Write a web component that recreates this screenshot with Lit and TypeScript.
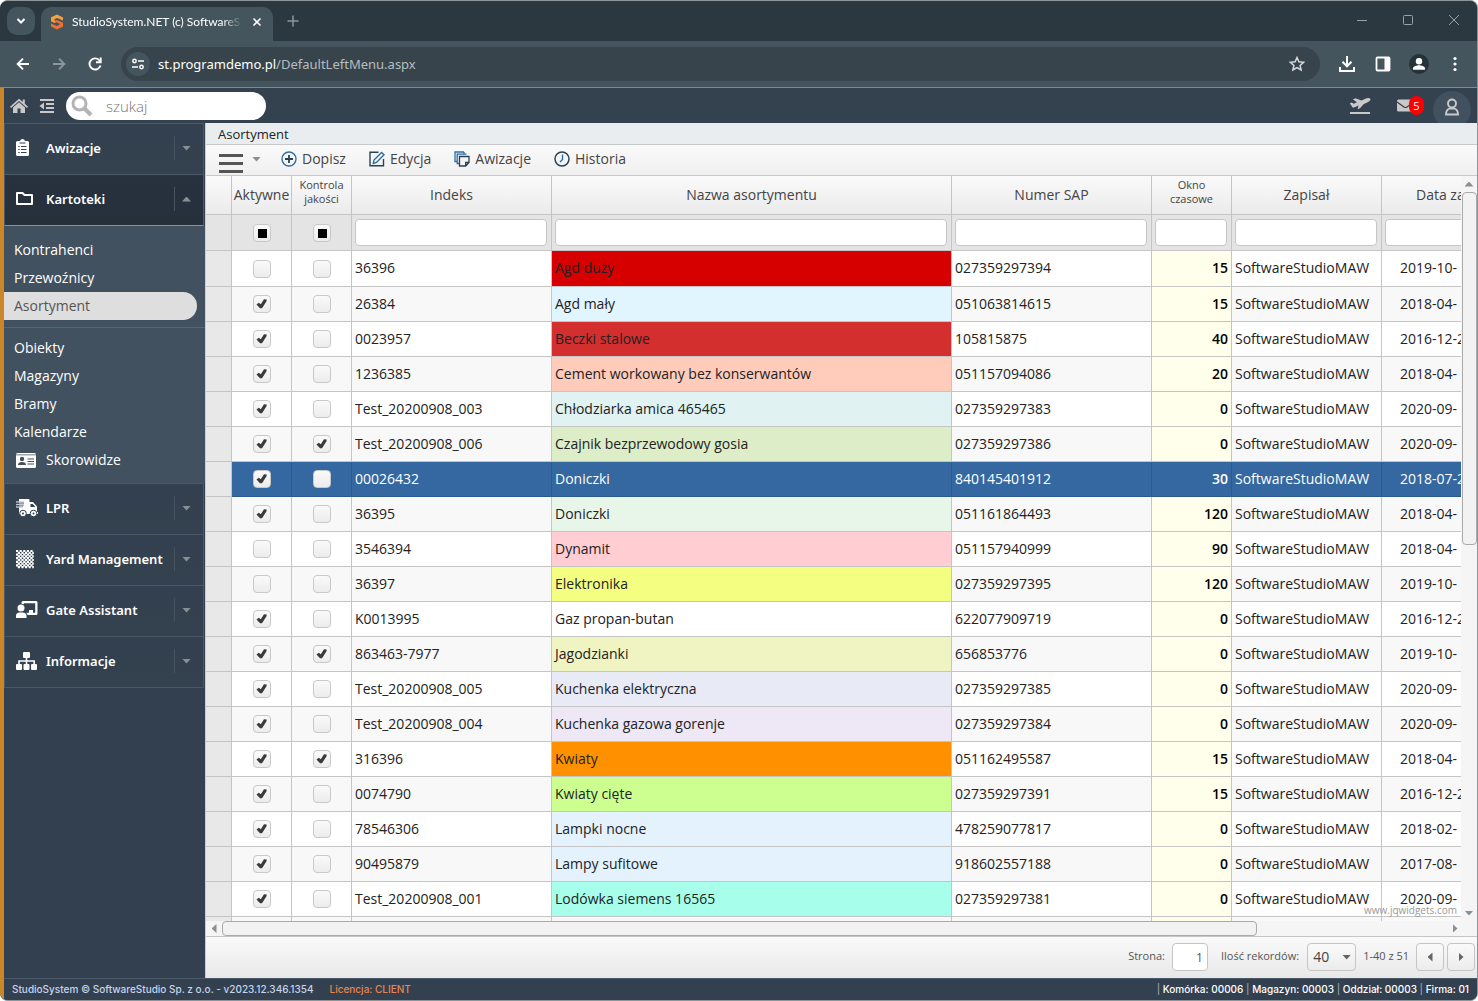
import { LitElement, html, css, TemplateResult } from 'lit';
import { customElement } from 'lit/decorators.js';
import { styleMap } from 'lit/directives/style-map.js';
import { classMap } from 'lit/directives/class-map.js';

interface Row {
  active: boolean;
  quality: boolean;
  index: string;
  name: string;
  color: string;
  sap: string;
  slot: string;
  date: string;
  selected?: boolean;
}

const row = (a: number, q: number, index: string, name: string, color: string, sap: string, slot: number, date: string, selected = false): Row => ({
  active: !!a, quality: !!q, index, name, color, sap, slot: String(slot), date, selected,
});

const ROWS: Row[] = [
  row(0, 0, '36396', 'Agd duży', '#d60000', '027359297394', 15, '2019-10-'),
  row(1, 0, '26384', 'Agd mały', '#e1f5fe', '051063814615', 15, '2018-04-'),
  row(1, 0, '0023957', 'Beczki stalowe', '#d32f2f', '105815875', 40, '2016-12-2'),
  row(1, 0, '1236385', 'Cement workowany bez konserwantów', '#ffccbc', '051157094086', 20, '2018-04-'),
  row(1, 0, 'Test_20200908_003', 'Chłodziarka amica 465465', '#e0f2f1', '027359297383', 0, '2020-09-'),
  row(1, 1, 'Test_20200908_006', 'Czajnik bezprzewodowy gosia', '#dcedc8', '027359297386', 0, '2020-09-'),
  row(1, 0, '00026432', 'Doniczki', '#3568a0', '840145401912', 30, '2018-07-2', true),
  row(1, 0, '36395', 'Doniczki', '#e8f5e9', '051161864493', 120, '2018-04-'),
  row(0, 0, '3546394', 'Dynamit', '#ffcdd2', '051157940999', 90, '2018-04-'),
  row(0, 0, '36397', 'Elektronika', '#f4ff81', '027359297395', 120, '2019-10-'),
  row(1, 0, 'K0013995', 'Gaz propan-butan', '#ffffff', '622077909719', 0, '2016-12-2'),
  row(1, 1, '863463-7977', 'Jagodzianki', '#f0f4c3', '656853776', 0, '2019-10-'),
  row(1, 0, 'Test_20200908_005', 'Kuchenka elektryczna', '#e8eaf6', '027359297385', 0, '2020-09-'),
  row(1, 0, 'Test_20200908_004', 'Kuchenka gazowa gorenje', '#ede7f6', '027359297384', 0, '2020-09-'),
  row(1, 1, '316396', 'Kwiaty', '#ff9100', '051162495587', 15, '2018-04-'),
  row(1, 0, '0074790', 'Kwiaty cięte', '#ccff90', '027359297391', 15, '2016-12-2'),
  row(1, 0, '78546306', 'Lampki nocne', '#e3f2fd', '478259077817', 0, '2018-02-'),
  row(1, 0, '90495879', 'Lampy sufitowe', '#e3f2fd', '918602557188', 0, '2017-08-'),
  row(1, 0, 'Test_20200908_001', 'Lodówka siemens 16565', '#a7ffeb', '027359297381', 0, '2020-09-'),
];

const icon = {
  chevron: html`<svg width="12" height="12" viewBox="0 0 12 12" fill="none" stroke="#fff" stroke-width="2"><path d="M2.500 4l3.500 3.500L9.500 4"/></svg>`,
  logo: html`<svg width="14" height="16" viewBox="0 0 14 16"><path d="M7 0.500 13 3.500v3L10 5.300 7 4 4.500 5.200v1.300L7 7.600 4.500 9 1 7.300v-4z" fill="#f6a23c"/><path d="M7 15.500 1 12.500v-3l3 1.300 3 1.200 2.500-1.200V9.500L7 8.400l-3-1.500L7 6l6 2.700v3.800z" fill="#f0702e"/></svg>`,
  close: html`<svg width="10" height="10" viewBox="0 0 10 10" stroke="#fff" stroke-width="1.600"><path d="M1.500 1.500l7 7M8.500 1.500l-7 7"/></svg>`,
  plus: html`<svg width="12" height="12" viewBox="0 0 12 12" stroke="#8b979c" stroke-width="1.500"><path d="M6 .5v11M.5 6h11"/></svg>`,
  min: html`<svg width="12" height="12" viewBox="0 0 12 12" stroke="#98a1a5"><path d="M1 5.500h10"/></svg>`,
  max: html`<svg width="12" height="12" viewBox="0 0 12 12" stroke="#98a1a5" fill="none"><rect x="1.500" y="0.500" width="9" height="9" rx="1"/></svg>`,
  winClose: html`<svg width="12" height="12" viewBox="0 0 12 12" stroke="#98a1a5"><path d="M1 0l10 10M11 0L1 10"/></svg>`,
  back: html`<svg width="16" height="16" viewBox="0 0 16 16" stroke="#fff" stroke-width="1.900" fill="none"><path d="M14 8H3M8 2.700 2.700 8 8 13.300"/></svg>`,
  forward: html`<svg width="16" height="16" viewBox="0 0 16 16" stroke="#8b979c" stroke-width="1.900" fill="none"><path d="M2 8h11M8 2.700 13.300 8 8 13.300"/></svg>`,
  reload: html`<svg width="16" height="16" viewBox="0 0 16 16" fill="none" stroke="#fff" stroke-width="1.900"><path d="M13.500 9.500a5.600 5.600 0 1 1-1.300-5.400L13.500 5.500"/><path d="M13.700 1.500v4.700H9" /></svg>`,
  tune: html`<svg width="14" height="14" viewBox="0 0 14 14" fill="none" stroke="#fff" stroke-width="1.500"><circle cx="3.500" cy="4" r="1.700"/><path d="M7 4h6M1 10h6"/><circle cx="10.500" cy="10" r="1.700"/></svg>`,
  star: html`<svg width="18" height="18" viewBox="0 0 18 18" fill="none" stroke="#d5dadc" stroke-width="1.500"><path d="M9 2.500l1.900 4.300 4.700.5-3.500 3.100 1 4.600L9 12.600 4.900 15l1-4.600L2.400 7.300l4.700-.5z"/></svg>`,
  download: html`<svg width="18" height="18" viewBox="0 0 18 18" fill="none" stroke="#fff" stroke-width="2"><path d="M9 1v10M4.500 6.800 9 11.300l4.500-4.500M2 12v4h14v-4"/></svg>`,
  panel: html`<svg width="16" height="16" viewBox="0 0 16 16"><rect x="1.500" y="1.500" width="13" height="13" rx="1" fill="none" stroke="#fff" stroke-width="1.800"/><path d="M9.500 1.500h5v13h-5z" fill="#fff"/></svg>`,
  profile: html`<svg width="20" height="20" viewBox="0 0 20 20"><circle cx="10" cy="10" r="10" fill="#26323a"/><circle cx="10" cy="7.300" r="3.200" fill="#fff"/><path d="M4 15.700v-1.400c0-2 4-3 6-3s6 1 6 3v1.400z" fill="#fff"/></svg>`,
  dots: html`<svg width="4" height="16" viewBox="0 0 4 16" fill="#fff"><circle cx="2" cy="2.500" r="1.600"/><circle cx="2" cy="8" r="1.600"/><circle cx="2" cy="13.500" r="1.600"/></svg>`,
  home: html`<svg width="18" height="16" viewBox="0 0 18 16" fill="#c9c9c9"><path d="M9 .8 0 8.700l1.100 1.200L9 3l7.900 6.900L18 8.700l-3.200-2.900V1.500h-2v2.600z"/><path d="M9 4.300 3 9.500V15h4.500v-4.500h3V15H15V9.500z"/></svg>`,
  outdent: html`<svg width="16" height="16" viewBox="0 0 16 16" fill="#c9c9c9"><path d="M1 1h14v2H1zM7 5h8v2H7zM7 9h8v2H7zM1 13h14v2H1zM5 4.500v7L.5 8z"/></svg>`,
  search: html`<svg width="22" height="22" viewBox="0 0 22 22" fill="none" stroke="#b4b4b4"><circle cx="8.500" cy="8.500" r="6.500" stroke-width="3"/><path d="M13.500 13.500 20 20" stroke-width="4"/></svg>`,
  plane: html`<svg width="22" height="18" viewBox="0 0 22 18" fill="#c9c9c9"><path d="M1 15h20v2H1zM3.800 10.700.8 6.200l2-.8 2 1.300 3.200-1.500L3.900 2.400l2.500-1.100 6.100 2.300 3.800-1.800c1.800-.9 4.300-1 5 0 .6 1.200-.6 2.400-2.200 3.200l-4.600 2.200-3.500 4-2.400 1 .9-3.700-3.200 1.600z"/></svg>`,
  mail: html`<svg width="17" height="13" viewBox="0 0 17 13"><rect width="17" height="12" y=".5" rx="1.500" fill="#c9c9c9"/><path d="M0 3l7 5q1.500 1 3 0l7-5" fill="none" stroke="#34414f" stroke-width="1.200"/></svg>`,
  user: html`<svg width="16" height="18" viewBox="0 0 16 18" fill="none" stroke="#c9c9c9" stroke-width="1.900"><circle cx="8" cy="5.500" r="4"/><path d="M5.500 10.500h5q3.500 1.500 3.500 6H2q0-4.500 3.500-6z"/></svg>`,
  clipboard: html`<svg width="24" height="20" viewBox="0 0 24 20"><path d="M2.500 3H5a2.600 2.600 0 0 1 5 0h2.500q1.500 0 1.500 1.500v12q0 1.500-1.500 1.500h-10Q1 18 1 16.500v-12Q1 3 2.500 3z" fill="#fff"/><path d="M6 8.500h5.500M6 11.500h5.500M6 14.500h5.500M3.300 8.500h1.400M3.300 11.500h1.400M3.300 14.500h1.400M4.500 5h6" stroke="#334050" fill="none"/></svg>`,
  folder: html`<svg width="24" height="20" viewBox="0 0 24 20" fill="none" stroke="#fff" stroke-width="2"><path d="M2 4h5.500l2 2H17v9H2z" stroke-linejoin="round"/></svg>`,
  card: html`<svg width="24" height="20" viewBox="0 0 24 20"><rect x="2" y="3" width="20" height="15" rx="1.500" fill="#fff"/><circle cx="8" cy="9" r="2.200" fill="#425160"/><path d="M4 15q0-3 4-3t4 3zM13.500 8.500H20v1h-6.500zM13.500 11H20v1h-6.500zM13.500 13.500H20v1h-6.500zM2 4.500h20v.8H2z" fill="#425160"/></svg>`,
  truck: html`<svg width="24" height="20" viewBox="0 0 24 20"><path d="M4 1h9.500q1 0 1 1v2H18l4 4.500V14h1v2H4V1z" fill="#fff"/><path d="M1 4h8M1 6.500h8M1 9h7" stroke="#c3cad6" stroke-width="1.300"/><path d="M1 5.200h8M2 7.800h6.500" stroke="#334050" stroke-width=".7"/><path d="M15.500 6v3h5l-2.800-3z" fill="#334050"/><g fill="#fff" stroke="#334050"><circle cx="8" cy="15.500" r="3.300"/><circle cx="18.500" cy="15.500" r="3.300"/></g><circle cx="8" cy="15.500" r="1" fill="#334050"/><circle cx="18.500" cy="15.500" r="1" fill="#334050"/></svg>`,
  yard: html`<svg width="24" height="20" viewBox="0 0 24 20"><g fill="none" stroke="#fff" stroke-width="2.200" stroke-dasharray="2.200 1.400"><path d="M1 2h18M1 5.600h18M1 9.200h18M1 12.800h18M1 16.400h18"/><path d="M2.800 3.800h16M2.800 7.400h16M2.800 11h16M2.800 14.600h16M2.800 18.200h16"/></g></svg>`,
  gate: html`<svg width="24" height="20" viewBox="0 0 24 20" fill="#fff"><path d="M6.500 2.500Q6.500 1 8 1h13q1.500 0 1.500 1.500v11Q22.500 15 21 15h-8.500q-.4-1.500-1.300-2.300H14V10h4v2.700h2.200V3.300H8.900v1Q8 3.700 6.500 3.700z"/><circle cx="6" cy="8" r="3.500"/><path d="M1 18v-2q0-3.500 3.500-3.500h3Q11.500 12.500 11.500 16v2z"/></svg>`,
  sitemap: html`<svg width="24" height="20" viewBox="0 0 24 20" fill="#fff"><rect x="8" y="1" width="7" height="6" rx="1"/><rect x="1" y="13" width="6" height="6" rx="1"/><rect x="8.500" y="13" width="6" height="6" rx="1"/><rect x="16" y="13" width="6" height="6" rx="1"/><path d="M10.700 7h1.600v2.200H20V13h-1.600v-2.200h-6.100V13h-1.600v-2.200H4.800V13H3.200V9.200h7.500z"/></svg>`,
  add: html`<svg width="16" height="16" viewBox="0 0 16 16" fill="none"><circle cx="8" cy="8" r="7" stroke="#2f6da5" stroke-width="1.400"/><path d="M8 4v8M4 8h8" stroke="#2a4152" stroke-width="1.800"/></svg>`,
  edit: html`<svg width="16" height="16" viewBox="0 0 16 16" fill="none" stroke-width="1.400"><path d="M9.500 1.200H1v13.500h13.500V8" stroke="#2a4152"/><path d="M12.600 1.500 15 3.700 7.500 11.500l-3.200.9.700-3.300z" stroke="#2f6da5"/></svg>`,
  copy: html`<svg width="16" height="16" viewBox="0 0 16 16" fill="none" stroke-width="1.300"><path d="M10 1H1v9.500h2M12.500 3.200H3.200v9.300h2.300M10 1v2" stroke="#2f6da5"/><path d="M5.500 5.500H15v6L11.700 15H5.500zM15 11.500h-3.300V15" stroke="#2a4152"/></svg>`,
  clock: html`<svg width="16" height="16" viewBox="0 0 16 16" fill="none"><circle cx="8" cy="8" r="7" stroke="#2a4152" stroke-width="1.500"/><path d="M8.500 3.500v5L6 11" stroke="#2f6da5" stroke-width="1.400"/></svg>`,
};

@customElement('app-root')
export class AppRoot extends LitElement {
  static styles = css`
    :host {
      display: flex;
      flex-direction: column;
      height: 100vh;
      box-sizing: border-box;
      overflow: hidden;
      border: 1px solid #8d9598;
      border-left: 0;
      border-radius: 8px;
      background: #334050;
      font: 14px/20px 'Open Sans', 'Noto Sans', sans-serif;
      color: #222;
    }
    * { box-sizing: border-box; }
    svg { display: block; flex: none; }
    button {
      display: inline-flex;
      align-items: center;
      justify-content: center;
      padding: 0;
      border: 0;
      background: none;
      color: inherit;
      font: inherit;
    }
    a { color: inherit; text-decoration: none; }
    ul { margin: 0; padding: 0; list-style: none; }

    /* browser frame */
    .tabs { display: flex; height: 40px; padding: 6px 9px 0 7px; background: #2c383f; flex: none; }
    .tablist { width: 28px; height: 28px; border-radius: 10px; background: #45555e; }
    .tab {
      display: flex;
      align-items: center;
      width: 232px;
      margin-left: 6px;
      padding: 0 11px 5px 9px;
      border-radius: 10px 10px 0 0;
      background: #45555e;
      color: #fff;
      font: 12px/20px 'Lato', sans-serif;
    }
    .title {
      flex: 1;
      min-width: 0;
      margin: 0 10px 0 8px;
      overflow: hidden;
      white-space: nowrap;
      mask-image: linear-gradient(90deg, #000 88%, transparent);
    }
    .new { width: 28px; height: 28px; margin-left: 6px; }
    .win { display: flex; gap: 18px; margin-left: auto; }
    .win button { width: 28px; height: 28px; }
    .bar {
      display: flex;
      align-items: center;
      flex: none;
      height: 47px;
      padding: 0 8px 0 9px;
      gap: 8px;
      background: #45555e;
      border-bottom: 1px solid #7d8a90;
    }
    .bar button { width: 28px; height: 28px; }
    .omni {
      display: flex;
      align-items: center;
      flex: 1;
      height: 34px;
      margin: 0 5px 0 4px;
      padding: 0 9px 0 5px;
      border-radius: 17px;
      background: #38444b;
      color: #fff;
      font: 13px/20px 'Noto Sans', sans-serif;
    }
    .omni .tune { width: 24px; height: 24px; margin-right: 8px; border-radius: 12px; background: #45555e; }
    .url { flex: 1; color: #b6bdc0; }
    .url b { font-weight: 400; color: #fff; }

    /* application */
    .app { display: flex; flex-direction: column; flex: 1; min-height: 0; border-left: 4px solid #cb862a; }
    .top { display: flex; align-items: center; flex: none; height: 35px; padding: 0 6px; background: #34414f; overflow: hidden; }
    .top .out { margin: 0 11px 0 11px; }
    .search { display: flex; align-items: center; width: 200px; height: 28px; padding-left: 5px; border-radius: 14px; background: #fff; }
    .search input { flex: 1; min-width: 0; margin-left: 13px; padding: 0; border: 0; outline: 0; background: none; font: 300 15px/20px 'Open Sans', sans-serif; }
    .search input::placeholder { color: #777; }
    .right { display: flex; align-items: center; margin-left: auto; }
    .mail { margin-left: 26px; }
    .badge { margin-left: -5px; width: 15px; height: 19px; border-radius: 8px; background: #f00; color: #fff; font-size: 11px; line-height: 19px; text-align: center; }
    .avatar { align-self: flex-start; width: 38px; height: 38px; margin: 8px 0 0 9px; padding-bottom: 6px; border-radius: 19px; background: #425160; }
    .body { display: flex; flex: 1; min-height: 0; }

    /* side menu */
    nav { width: 202px; flex: none; padding-right: 1px; color: #fff; background: #334050; border-right: 1px solid #c3d2da; }
    .item { display: flex; align-items: center; width: 100%; height: 51px; padding: 0 0 2px 10px; border: 1px solid #4a5967; border-bottom: 0; background: linear-gradient(#33404f, #34424f); text-align: left; font: 600 13px/20px 'Noto Sans', sans-serif; }
    .item span { flex: 1; padding: 0 0 1px 7px; }
    .item.open { background: linear-gradient(#28323f, #26303b); border-bottom: 1px solid #cb862a; height: 52px; }
    .item.last { border-bottom: 1px solid #4a5967; height: 52px; }
    .item i { width: 29px; height: 24px; display: flex; align-items: center; padding-left: 7px; border-left: 1px solid #46535f; }
    .arrow { width: 9px; height: 5px; background: #8a8f94; clip-path: polygon(0 0, 100% 0, 50% 100%); }
    .arrow.up { clip-path: polygon(50% 0, 100% 100%, 0 100%); }
    .arrow.left { width: 5px; height: 9px; clip-path: polygon(100% 0, 100% 100%, 0 50%); }
    .arrow.rightward { width: 5px; height: 9px; clip-path: polygon(0 0, 100% 50%, 0 100%); }
    .sub { padding: 10px 0 9px; margin-right: -1px; background: #425160; font-weight: 500; }
    .sub a { display: flex; align-items: center; gap: 8px; height: 28px; padding: 0 10px; }
    .sub .current { margin-right: 8px; border-radius: 0 14px 14px 0; background: #dedede; color: #555; font-weight: 400; }
    .sub .sep { margin-top: 7px; padding-top: 6px; border-top: 1px solid #566573; }

    /* content */
    main { display: flex; flex-direction: column; flex: 1; min-width: 0; background: #fff; }
    h1 { margin: 0; padding: 1px 12px 0; height: 22px; flex: none; background: #e9edf0; border-bottom: 1px solid #c5c9cc; font-size: 13px; line-height: 20px; font-weight: 400; }
    .tools { display: flex; align-items: center; flex: none; height: 30px; padding: 0 13px 2px; background: linear-gradient(#fafafa, #f0f0f0); color: #444; }
    .tools > button { gap: 5px; height: 28px; margin-right: 23px; }
    .tools .menu { gap: 9px; margin-right: 20px; }
    .burger { display: flex; flex-direction: column; gap: 5px; width: 24px; padding-top: 8px; }
    .burger u { height: 3px; background: #555; }
    .grid { display: flex; flex: 1; min-height: 0; position: relative; border-top: 1px solid #c8c8c8; overflow: hidden; }
    .view { flex: 1; min-width: 0; overflow: hidden; }
    table { width: 100%; table-layout: fixed; border-collapse: separate; border-spacing: 0; }
    th, td { height: 35px; padding: 0 3px 1px; border: 0 solid #c5c5c5; border-width: 0 1px 1px 0; overflow: hidden; white-space: nowrap; font-weight: 400; text-align: left; }
    th:last-child, td:last-child { border-right: 0; }
    thead th { height: 39px; padding: 0; background: linear-gradient(#fafafa, #ebebeb); color: #444; text-align: center; }
    thead .two { padding-bottom: 6px; font-size: 11px; line-height: 14px; }
    thead .clip { padding-left: 34px; text-align: left; }
    .filter td { height: 36px; background: #e4e4e4; }
    .filter input[type='text'] { display: block; width: calc(100% - 1px); height: 27px; border: 1px solid #c5c5c5; border-radius: 4px; background: #fff; }
    .filter td:last-child { padding-right: 0; }
    .filter td:last-child input { width: 120px; }
    tr.first td { height: 36px; }
    tbody tr:nth-child(odd) td { background: #f8f8f8; }
    tbody tr:nth-child(even) td { background: #fff; }
    tbody tr.filter td { background: #e4e4e4; }
    tbody tr td.head { background: #e8e8e8; }
    tbody tr td.slot { background: #ffffeb; text-align: right; font-weight: 600; color: #000; }
    tbody tr td.name { background: var(--tone); }
    td.date { padding: 0 0 1px 18px; text-overflow: clip; }
    td.box { text-align: center; padding: 0; }
    tbody tr.sel td:not(.head) { background: #3568a0; border-color: #2c5a8e; color: #fff; font-weight: 500; }
    tbody tr.sel td.slot { font-weight: 600; }
    input[type='checkbox'] { appearance: none; display: block; width: 18px; height: 18px; margin: 0 auto; border: 1px solid #c8c8c8; border-radius: 4px; background: linear-gradient(#fafafa, #ececec); }
    input[type='checkbox']:checked::before { content: ''; display: block; width: 16px; height: 16px; background: #3a3a3a; clip-path: path('M3 8.500 5.300 6.800 7.300 8.300 10.500 3.300 13.200 3.600 13 5.200 8.500 12.300 6.500 12.300z'); }
    input[type='checkbox']:indeterminate::before { content: ''; display: block; width: 9px; height: 9px; margin: 4px; background: #000; }
    .brand { position: absolute; right: 20px; bottom: 3px; color: #999; font-size: 10px; line-height: 16px; }
    .vbar { display: flex; flex-direction: column; align-items: center; width: 16px; flex: none; background: #f5f5f5; }
    .vbar button, .hbar button { flex: none; width: 16px; height: 16px; }
    .track { flex: 1; align-self: stretch; min-height: 0; }
    .thumb { border: 1px solid #aaa; border-radius: 4px; background: #f2f2f2; }
    .vbar .thumb { width: 15px; height: 49.500%; margin-left: 1px; }
    .hbar { display: flex; flex: none; align-items: center; height: 16px; padding-right: 14px; background: #f5f5f5; border-bottom: 1px solid #c5c5c5; }
    .hbar .thumb { width: 84.500%; height: 15px; }
    .pager { display: flex; align-items: center; justify-content: flex-end; flex: none; height: 41px; padding: 0 2px 1px; background: linear-gradient(#fafafa, #e8e8e8); color: #555; font-size: 11px; }
    .pager label, .pager > span { padding-bottom: 2px; }
    .pager input { width: 36px; height: 28px; margin: 0 13px 0 7px; padding: 0 4px; border: 1px solid #c5c5c5; border-radius: 4px; background: #fff; color: #555; font: 12px/20px 'Open Sans', sans-serif; text-align: right; }
    .pick { display: flex; align-items: center; width: 49px; height: 28px; margin: 0 7px 0 8px; padding-right: 4px; border: 1px solid #c5c5c5; border-radius: 4px; background: linear-gradient(#fafafa, #ececec); }
    .pick select { appearance: none; flex: 1; min-width: 0; padding: 0 0 0 5px; border: 0; background: none; color: #444; font: 14px/20px 'Open Sans', sans-serif; }
    .pager button { width: 28px; height: 28px; border: 1px solid #c5c5c5; border-radius: 4px; background: linear-gradient(#fafafa, #ececec); }
    .pager .prev { margin: 0 3px 0 7px; }
    .pager .arrow { background: #666; }
    footer { display: flex; align-items: center; gap: 16px; flex: none; height: 22px; padding: 0 8px 2px; border-top: 1px solid #4a5967; background: #334050; color: #c8d4ea; font: 500 10px/18px 'Inter', 'Open Sans', sans-serif; }
    footer .lic { color: #e8854a; }
    footer .info { margin-left: auto; color: #fff; }
    footer .info span { color: #98a2ac; }
  `;

  private item(label: string, glyph: TemplateResult, extra = '') {
    const open = extra === 'open';
    return html`<button class="item ${extra}" aria-expanded=${open}>${glyph}<span>${label}</span><i><b class="arrow ${open ? 'up' : ''}"></b></i></button>`;
  }

  private check(label: string, checked: boolean, mixed = false) {
    return html`<input type="checkbox" aria-label=${label} .checked=${checked} .indeterminate=${mixed}>`;
  }

  private row(r: Row, i: number) {
    return html`<tr class=${classMap({ sel: !!r.selected, first: i === 0 })}>
      <td class="head"></td>
      <td class="box">${this.check('Aktywne', r.active)}</td>
      <td class="box">${this.check('Kontrola jakości', r.quality)}</td>
      <td>${r.index}</td>
      <td class="name" style=${styleMap({ '--tone': r.color })}>${r.name}</td>
      <td>${r.sap}</td>
      <td class="slot">${r.slot}</td>
      <td>SoftwareStudioMAW</td>
      <td class="date">${r.date}</td>
    </tr>`;
  }

  render() {
    const text = (label: string) => html`<td><input type="text" aria-label=${label}></td>`;
    return html`
      <div class="tabs">
        <button class="tablist" aria-label="Karty">${icon.chevron}</button>
        <div class="tab">${icon.logo}<span class="title">StudioSystem.NET (c) SoftwareS</span><button aria-label="Zamknij kartę">${icon.close}</button></div>
        <button class="new" aria-label="Nowa karta">${icon.plus}</button>
        <div class="win">
          <button aria-label="Minimalizuj">${icon.min}</button>
          <button aria-label="Maksymalizuj">${icon.max}</button>
          <button aria-label="Zamknij">${icon.winClose}</button>
        </div>
      </div>
      <div class="bar">
        <button aria-label="Wstecz">${icon.back}</button>
        <button aria-label="Dalej">${icon.forward}</button>
        <button aria-label="Odśwież">${icon.reload}</button>
        <div class="omni">
          <button class="tune" aria-label="Informacje o witrynie">${icon.tune}</button>
          <span class="url"><b>st.programdemo.pl</b>/DefaultLeftMenu.aspx</span>
          <button aria-label="Zakładka">${icon.star}</button>
        </div>
        <button aria-label="Pobrane">${icon.download}</button>
        <button aria-label="Panel boczny">${icon.panel}</button>
        <button aria-label="Profil">${icon.profile}</button>
        <button aria-label="Menu">${icon.dots}</button>
      </div>
      <div class="app">
        <header class="top">
          <button aria-label="Start">${icon.home}</button>
          <button class="out" aria-label="Zwiń menu">${icon.outdent}</button>
          <label class="search">${icon.search}<input type="text" placeholder="szukaj" aria-label="szukaj"></label>
          <div class="right">
            <button aria-label="Odloty">${icon.plane}</button>
            <button class="mail" aria-label="Wiadomości">${icon.mail}<span class="badge">5</span></button>
            <button class="avatar" aria-label="Konto">${icon.user}</button>
          </div>
        </header>
        <div class="body">
          <nav>
            ${this.item('Awizacje', icon.clipboard)}
            ${this.item('Kartoteki', icon.folder, 'open')}
            <ul class="sub">
              <li><a href="#">Kontrahenci</a></li>
              <li><a href="#">Przewoźnicy</a></li>
              <li><a class="current" href="#">Asortyment</a></li>
              <li class="sep"><a href="#">Obiekty</a></li>
              <li><a href="#">Magazyny</a></li>
              <li><a href="#">Bramy</a></li>
              <li><a href="#">Kalendarze</a></li>
              <li><a href="#">${icon.card}Skorowidze</a></li>
            </ul>
            ${this.item('LPR', icon.truck)}
            ${this.item('Yard Management', icon.yard)}
            ${this.item('Gate Assistant', icon.gate)}
            ${this.item('Informacje', icon.sitemap, 'last')}
          </nav>
          <main>
            <h1>Asortyment</h1>
            <div class="tools">
              <button class="menu" aria-label="Menu"><span class="burger"><u></u><u></u><u></u></span><b class="arrow"></b></button>
              <button>${icon.add}Dopisz</button>
              <button>${icon.edit}Edycja</button>
              <button>${icon.copy}Awizacje</button>
              <button>${icon.clock}Historia</button>
            </div>
            <div class="grid">
              <div class="view">
                <table>
                  <colgroup>
                    ${[26, 60, 60, 200, 400, 200, 80, 150].map((w) => html`<col style=${styleMap({ width: w + 'px' })}>`)}
                    <col>
                  </colgroup>
                  <thead>
                    <tr>
                      <th></th><th>Aktywne</th><th class="two">Kontrola<br>jakości</th><th>Indeks</th><th>Nazwa asortymentu</th>
                      <th>Numer SAP</th><th class="two">Okno<br>czasowe</th><th>Zapisał</th><th class="clip">Data za</th>
                    </tr>
                  </thead>
                  <tbody>
                    <tr class="filter">
                      <td></td>
                      <td class="box">${this.check('Filtr: Aktywne', false, true)}</td>
                      <td class="box">${this.check('Filtr: Kontrola jakości', false, true)}</td>
                      ${['Indeks', 'Nazwa asortymentu', 'Numer SAP', 'Okno czasowe', 'Zapisał', 'Data'].map(text)}
                    </tr>
                    ${ROWS.map((r, i) => this.row(r, i))}
                    <tr><td class="head"></td>${Array.from({ length: 5 }, () => html`<td></td>`)}<td class="slot"></td><td></td><td></td></tr>
                  </tbody>
                </table>
              </div>
              <span class="brand">www.jqwidgets.com</span>
              <div class="vbar">
                <button aria-label="W górę"><b class="arrow up"></b></button>
                <div class="track"><div class="thumb"></div></div>
                <button aria-label="W dół"><b class="arrow"></b></button>
              </div>
            </div>
            <div class="hbar">
              <button aria-label="W lewo"><b class="arrow left"></b></button>
              <div class="track"><div class="thumb"></div></div>
              <button aria-label="W prawo"><b class="arrow rightward"></b></button>
            </div>
            <div class="pager">
              <label for="page">Strona:</label><input id="page" type="text" .value=${'1'}>
              <label for="size">Ilość rekordów:</label>
              <div class="pick"><select id="size"><option>40</option></select><b class="arrow"></b></div>
              <span>1-40 z 51</span>
              <button class="prev" aria-label="Poprzednia"><b class="arrow left"></b></button>
              <button aria-label="Następna"><b class="arrow rightward"></b></button>
            </div>
          </main>
        </div>
        <footer>
          <div>StudioSystem © SoftwareStudio Sp. z o.o. - v2023.12.346.1354</div>
          <div class="lic">Licencja: CLIENT</div>
          <div class="info"><span>|</span> Komórka: 00006 <span>|</span> Magazyn: 00003 <span>|</span> Oddział: 00003 <span>|</span> Firma: 01</div>
        </footer>
      </div>
    `;
  }
}
